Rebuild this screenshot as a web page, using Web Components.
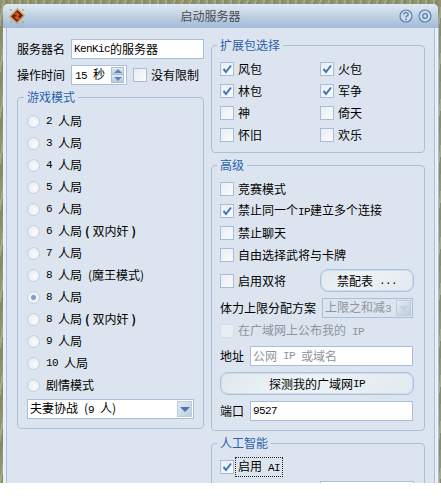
<!DOCTYPE html>
<html lang="zh">
<head>
<meta charset="utf-8">
<title>启动服务器</title>
<style>
  html, body { margin: 0; padding: 0; background: #fff; }
  body { font: 12px/14px "Noto Sans CJK SC", sans-serif; color: #000; }
  /* latin text is narrower than the cjk, like the old bitmap font */
  .l { font: 11px/14px "Liberation Mono", monospace; letter-spacing: -0.6px; white-space: pre; }
  .rows { display: block; }
  .two { display: grid; grid-template-columns: 100px 1fr; }
</style>
</head>
<body>
<start-server>
  <div slot="left">
    <form-row label="服务器名"><text-box style="width:133px;margin-left:6px"><span class="l">KenKic</span>的服务器</text-box></form-row>
    <form-row label="操作时间" style="margin-top:6px">
      <spin-box style="margin-left:6px"><span class="l">15 </span>秒</spin-box>
      <check-box style="margin-left:6px;height:20px">没有限制</check-box>
    </form-row>
    <group-box title="游戏模式" style="margin-top:5px;height:339px">
      <div class="rows">
        <radio-box><span class="l">2 </span>人局</radio-box>
        <radio-box><span class="l">3 </span>人局</radio-box>
        <radio-box><span class="l">4 </span>人局</radio-box>
        <radio-box><span class="l">5 </span>人局</radio-box>
        <radio-box><span class="l">6 </span>人局</radio-box>
        <radio-box><span class="l">6 </span>人局<b>(</b>双内奸<b>)</b></radio-box>
        <radio-box><span class="l">7 </span>人局</radio-box>
        <radio-box><span class="l">8 </span>人局<span class="l"> </span>(魔王模式)</radio-box>
        <radio-box checked><span class="l">8 </span>人局</radio-box>
        <radio-box><span class="l">8 </span>人局<b>(</b>双内奸<b>)</b></radio-box>
        <radio-box><span class="l">9 </span>人局</radio-box>
        <radio-box><span class="l">10 </span>人局</radio-box>
        <radio-box>剧情模式</radio-box>
      </div>
      <combo-box style="width:167px;margin-top:3px">夫妻协战<span class="l"> </span>(<span class="l">9 </span>人)</combo-box>
    </group-box>
  </div>
  <div slot="right" style="--pl:8px">
    <group-box title="扩展包选择" style="height:115px">
      <div class="two">
        <check-box checked>风包</check-box><check-box checked>火包</check-box>
        <check-box checked>林包</check-box><check-box checked>军争</check-box>
        <check-box>神</check-box><check-box>倚天</check-box>
        <check-box>怀旧</check-box><check-box>欢乐</check-box>
      </div>
    </group-box>
    <group-box title="高级" style="height:273px;margin-top:5px">
      <div class="rows">
        <check-box>竞赛模式</check-box>
        <check-box checked>禁止同一个<span class="l">IP</span>建立多个连接</check-box>
        <check-box>禁止聊天</check-box>
        <check-box>自由选择武将与卡牌</check-box>
      </div>
      <form-row style="justify-content:space-between;margin-top:3px">
        <check-box>启用双将</check-box>
        <push-button style="width:94px">禁配表<span class="l"> ...</span></push-button>
      </form-row>
      <form-row label="体力上限分配方案" style="margin-top:6px">
        <combo-box disabled style="width:91px;margin-left:6px">上限之和减<span class="l">3</span></combo-box>
      </form-row>
      <form-row style="margin-top:2px"><check-box disabled>在广域网上公布我的<span class="l"> IP</span></check-box></form-row>
      <form-row label="地址" style="margin-top:4px"><text-box grey style="width:163px;margin-left:6px">公网<span class="l"> IP </span>或域名</text-box></form-row>
      <push-button style="margin-top:6px">探测我的广域网<span class="l">IP</span></push-button>
      <form-row label="端口" style="margin-top:6px"><text-box style="width:163px;margin-left:6px"><span class="l">9527</span></text-box></form-row>
    </group-box>
    <group-box title="人工智能" style="height:80px;margin-top:5px">
      <check-box checked focused>启用<span class="l"> AI</span></check-box>
      <form-row style="justify-content:flex-end;margin-top:3px"><text-box style="width:94px"></text-box></form-row>
    </group-box>
  </div>
</start-server>

<script>
  // little helper so every element does not repeat the same three lines
  class Base extends HTMLElement {
    constructor(html) {
      super();
      this.attachShadow({ mode: 'open' });
      this.shadowRoot.innerHTML = html;
    }
  }

  const frame = `
    :host { display: flex; align-items: center; height: 22px; box-sizing: border-box; }
    :host([disabled]) { color: #8d949c; }
  `;

  class StartServer extends Base {
    constructor() {
      super(`
        <style>
          :host {
            display: block;
            height: 483px;
            overflow: hidden;
            padding: 4px 3px 0 3px;
            box-sizing: border-box;
            background: repeating-linear-gradient(100deg, #8f9570 0 3px, #a3a886 3px 5px, #868b67 5px 8px);
          }
          .win {
            height: 520px;
            border-radius: 5px 5px 0 0;
            background: #dce5ef;
            display: flex;
            flex-direction: column;
          }
          .title {
            flex: none;
            height: 24px;
            display: flex;
            align-items: center;
            padding: 0 6px 0 5px;
            border-radius: 5px 5px 0 0;
            background: linear-gradient(#e0e9f3, #c3d3e6 45%, #a0b9d8);
            color: #4c4c4c;
          }
          .title b { flex: 1; font-weight: normal; text-align: center; margin-right: 4px; }
          .title svg { display: block; }
          .title .btns { display: flex; gap: 5px; }
          .body {
            flex: 1;
            display: flex;
            gap: 7px;
            padding: 10px 10px 0 11px;
            border-left: 3px solid #e9eff6;
            border-right: 3px solid #e9eff6;
            box-shadow: inset 1px 0 #a9bfd8, inset -1px 0 #a9bfd8, 1px 0 #a9bfd8;
          }
          .left { width: 187px; flex: none; padding-top: 1px; }
          .right { flex: 1; min-width: 0; }
          ::slotted(*) { display: block; }
        </style>
        <div class="win">
          <div class="title">
            <svg width="18" height="18" viewBox="0 0 18 18">
              <path d="M9.5 2 16 8.5 9 16 2 9.5Z" fill="#6e1710" stroke="#c9a65a" stroke-width="1.6"/>
              <path d="M6 7 9 5l3 3-2 1 2 3-3 1-3-3 3-1Z" fill="#c9562a"/>
              <circle cx="3" cy="3" r="1" fill="#b9a36a"/><circle cx="15" cy="3" r="1" fill="#b9a36a"/>
              <circle cx="3" cy="15" r="1" fill="#b9a36a"/><circle cx="15" cy="15" r="1" fill="#b9a36a"/>
            </svg>
            <b>启动服务器</b>
            <div class="btns">
              <svg width="14" height="14" viewBox="0 0 14 14">
                <circle cx="7" cy="7" r="6" fill="#cfdbe9" stroke="#5d7fae" stroke-width="1.2"/>
                <path d="M4.8 5.4C4.8 3 9.2 3 9.2 5.4 9.2 7 7 6.8 7 8.6" fill="none" stroke="#5d7fae" stroke-width="1.4"/>
                <rect x="6.2" y="9.6" width="1.6" height="1.6" fill="#5d7fae"/>
              </svg>
              <svg width="14" height="14" viewBox="0 0 14 14">
                <circle cx="7" cy="7" r="6" fill="#cfdbe9" stroke="#5d7fae" stroke-width="1.2"/>
                <circle cx="7" cy="7" r="2.4" fill="none" stroke="#5d7fae" stroke-width="1.3"/>
              </svg>
            </div>
          </div>
          <div class="body">
            <div class="left"><slot name="left"></slot></div>
            <div class="right"><slot name="right"></slot></div>
          </div>
        </div>
      `);
    }
  }

  class GroupBox extends Base {
    constructor() {
      super(`
        <style>
          :host { display: block; box-sizing: border-box; }
          fieldset {
            margin: 0;
            height: 100%;
            box-sizing: border-box;
            min-width: 0;
            border: 1px solid #a9bfd9;
            border-radius: 4px;
            padding: 6px 10px 0 var(--pl, 9px);
          }
          legend { padding: 0 3px; margin-left: -3px; color: #2b62ad; line-height: 14px; }
        </style>
        <fieldset><legend></legend><slot></slot></fieldset>
      `);
    }
    connectedCallback() {
      this.shadowRoot.querySelector('legend').textContent = this.getAttribute('title');
      this.removeAttribute('title');
    }
  }

  class FormRow extends Base {
    constructor() {
      super(`
        <style>
          :host { display: flex; align-items: center; }
          span:empty { display: none; }
          span { flex: none; }
        </style>
        <span></span><slot></slot>
      `);
    }
    connectedCallback() {
      this.shadowRoot.querySelector('span').textContent = this.getAttribute('label') || '';
    }
  }

  class CheckBox extends Base {
    constructor() {
      super(`
        <style>
          ${frame}
          .box {
            flex: none;
            width: 12px;
            height: 12px;
            margin-right: 1px;
            border: 1px solid #a6bcd8;
            background: linear-gradient(135deg, #e8edf3, #fafbfc);
            display: flex;
          }
          :host([disabled]) .box { border-color: #d3dde9; background: #e8eef4; }
          svg { display: none; margin: auto; }
          :host([checked]) svg { display: block; }
          .text { padding: 1px 2px; border: 1px dotted transparent; white-space: nowrap; }
          :host([focused]) .text { border-color: #222; }
        </style>
        <div class="box">
          <svg width="10" height="10" viewBox="0 0 10 10"><path d="M1.5 5 4 8 9 1.5" fill="none" stroke="#3f76b8" stroke-width="2"/></svg>
        </div>
        <div class="text"><slot></slot></div>
      `);
    }
  }

  class RadioBox extends Base {
    constructor() {
      super(`
        <style>
          ${frame}
          .dot {
            flex: none;
            width: 13px;
            height: 13px;
            margin-right: 6px;
            border-radius: 50%;
            box-sizing: border-box;
            border: 1px solid #c0cfe0;
            background: radial-gradient(circle at 60% 60%, #fbfcfd, #dfe6ee);
          }
          :host([checked]) .dot { background: radial-gradient(circle, #7f9ec6 0 2px, #eef2f7 3px); }
          ::slotted(b) { font-weight: bold; margin: 0 3px; }
        </style>
        <div class="dot"></div><slot></slot>
      `);
    }
  }

  class TextBox extends Base {
    constructor() {
      super(`
        <style>
          :host {
            display: flex;
            align-items: center;
            height: 20px;
            padding: 0 2px;
            box-sizing: border-box;
            background: #fff;
            border: 1px solid #a9bfd9;
            white-space: nowrap;
          }
          :host([grey]) { color: #8d949c; }
        </style>
        <slot></slot>
      `);
    }
  }

  class SpinBox extends Base {
    constructor() {
      super(`
        <style>
          :host {
            display: flex;
            align-items: center;
            width: 56px;
            height: 20px;
            padding: 0 1px 0 3px;
            box-sizing: border-box;
            background: #fff;
            border: 1px solid #a9bfd9;
          }
          .t { flex: 1; white-space: nowrap; }
          .b { display: flex; flex-direction: column; margin-right: 1px; }
          .b div {
            width: 11px;
            height: 6px;
            border: 1px solid #a9bfd9;
            background: linear-gradient(#e4ebf3, #b9cbe0);
            display: flex;
          }
          .b div + div { border-top: 0; height: 7px; }
          svg { margin: auto; display: block; }
        </style>
        <div class="t"><slot></slot></div>
        <div class="b">
          <div><svg width="8" height="4"><path d="M0 4h8L4 0Z" fill="#5f86b6"/></svg></div>
          <div><svg width="8" height="4"><path d="M0 0h8L4 4Z" fill="#5f86b6"/></svg></div>
        </div>
      `);
    }
  }

  class ComboBox extends Base {
    constructor() {
      super(`
        <style>
          :host {
            display: flex;
            align-items: center;
            height: 20px;
            padding: 0 1px 0 2px;
            box-sizing: border-box;
            background: #fff;
            border: 1px solid #a9bfd9;
          }
          :host([disabled]) { background: #dce5ef; color: #8d949c; }
          .t { flex: 1; white-space: nowrap; overflow: hidden; }
          .b {
            flex: none;
            width: 15px;
            height: 16px;
            display: flex;
            background: linear-gradient(135deg, #e4ebf3, #bccde0);
            border: 1px solid #bccde0;
            box-sizing: border-box;
          }
          svg { margin: auto; display: block; }
          :host([disabled]) path { fill: #c4d0de; }
        </style>
        <div class="t"><slot></slot></div>
        <div class="b"><svg width="10" height="5"><path d="M0 0h10L5 5Z" fill="#4a76ad"/></svg></div>
      `);
    }
  }

  class PushButton extends Base {
    constructor() {
      super(`
        <style>
          :host {
            display: flex;
            align-items: center;
            justify-content: center;
            height: 23px;
            box-sizing: border-box;
            border: 1px solid #a9c1e0;
            border-radius: 8px;
            box-shadow: inset 0 0 0 1px #cfdcec;
            background: linear-gradient(135deg, #dfe8ef, #eef3f5 40%, #e2eaf0);
          }
        </style>
        <slot></slot>
      `);
    }
  }

  customElements.define('start-server', StartServer);
  customElements.define('group-box', GroupBox);
  customElements.define('form-row', FormRow);
  customElements.define('check-box', CheckBox);
  customElements.define('radio-box', RadioBox);
  customElements.define('text-box', TextBox);
  customElements.define('spin-box', SpinBox);
  customElements.define('combo-box', ComboBox);
  customElements.define('push-button', PushButton);
</script>
</body>
</html>
